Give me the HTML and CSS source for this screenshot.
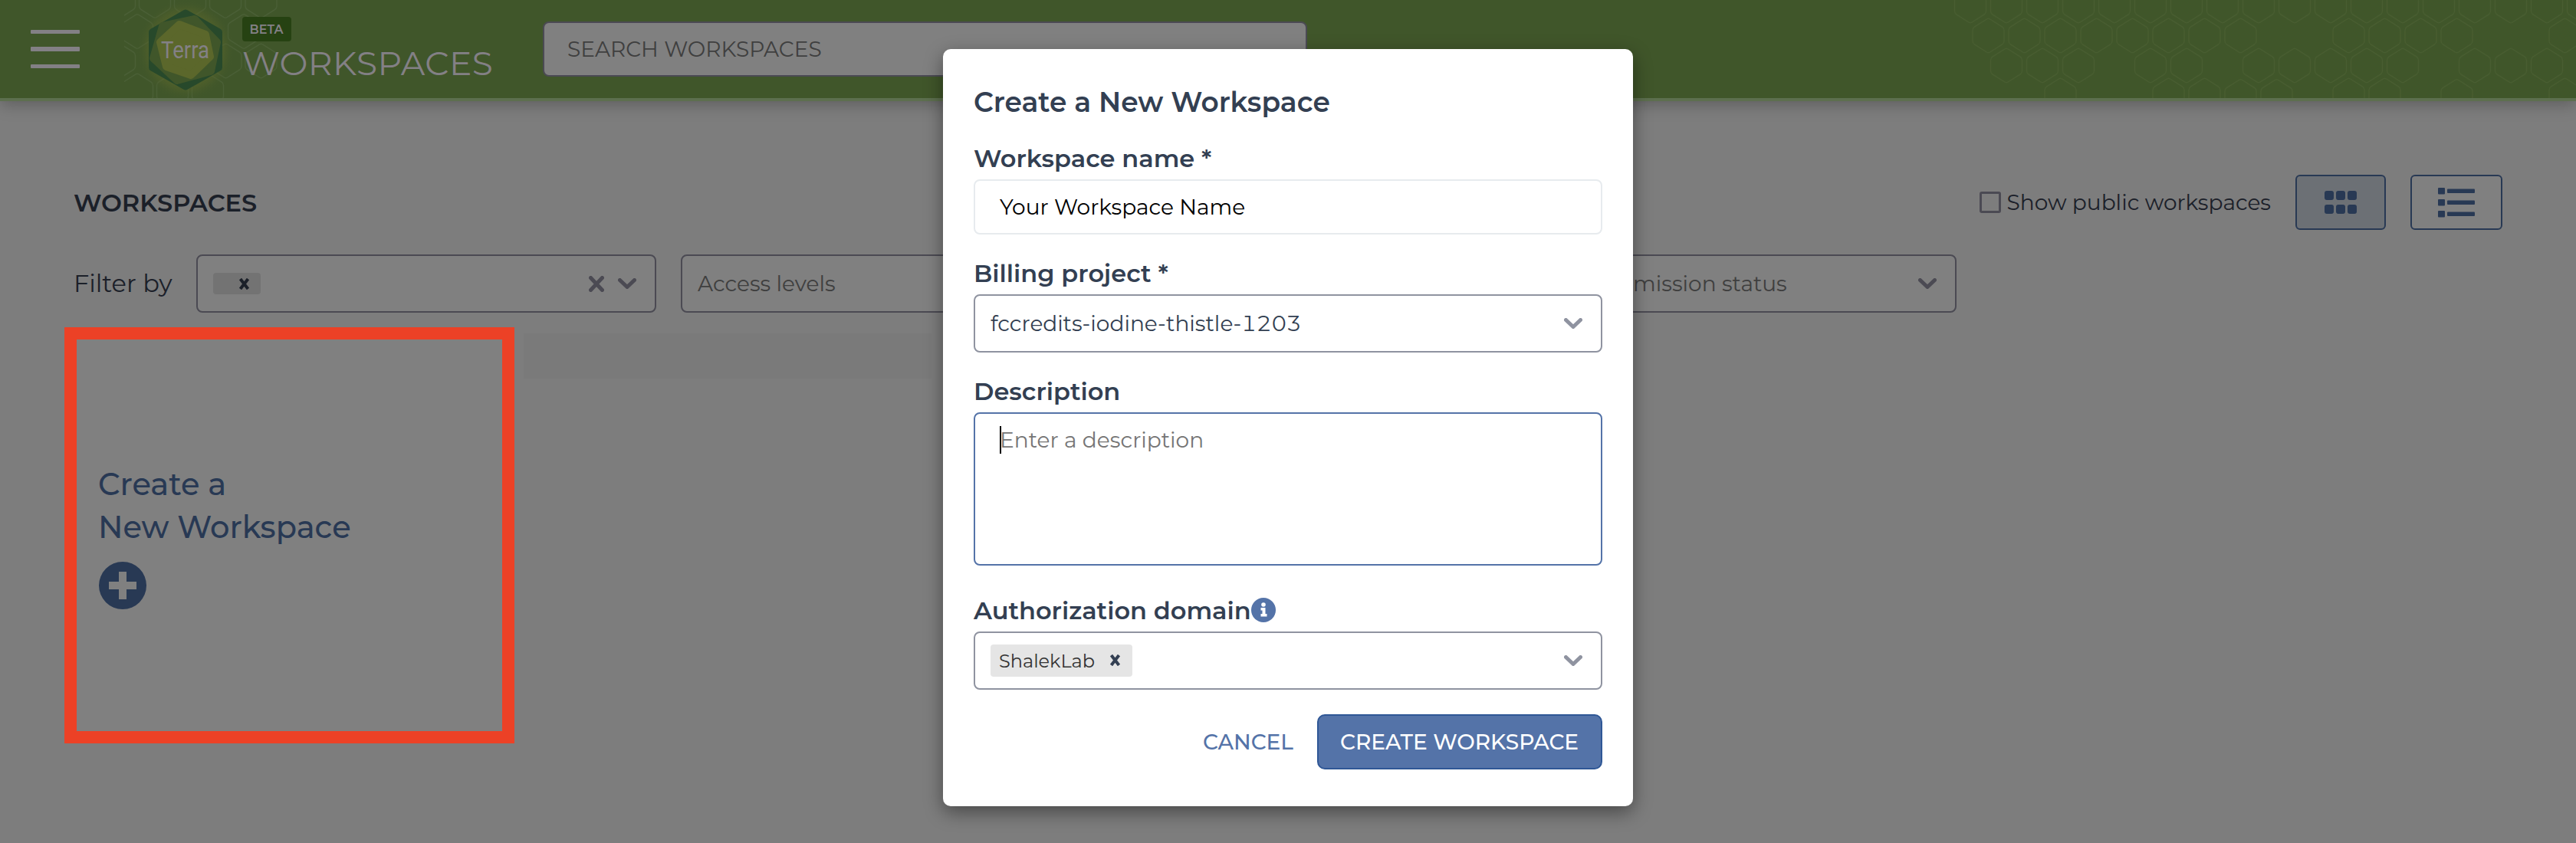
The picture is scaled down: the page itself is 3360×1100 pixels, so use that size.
FILE: index.html
```html
<!DOCTYPE html>
<html lang="en">
<head>
<meta charset="utf-8">
<title>Terra - Workspaces</title>
<link rel="stylesheet" href="styles.css">
</head>
<body>
<svg class="defs" width="0" height="0">
  <defs>
    <path id="hex" d="M-2-21.5Q0-23 2-21.5L18-11.5Q20.5-10 20.5-7V7Q20.5 10 18 11.5L2 21.5Q0 23-2 21.5L-18 11.5Q-20.5 10-20.5 7V-7Q-20.5-10-18-11.5Z"/>
    <path id="chev" d="M2.5 2.5L12 11.5L21.5 2.5"/>
    <path id="cross" d="M2.5 1L12.500 14M12.500 1L2.500 14"/>
  </defs>
</svg>

<header class="topbar">
  <svg class="hexes hexes-right" width="820" height="128">
    <g><use href="#hex" x="30" y="7.500"/><use href="#hex" x="77" y="7.500"/><use href="#hex" x="124" y="7.500"/><use href="#hex" x="171" y="7.500"/><use href="#hex" x="218" y="7.500"/><use href="#hex" x="265" y="7.500"/><use href="#hex" x="312" y="7.500"/><use href="#hex" x="359" y="7.500"/><use href="#hex" x="406" y="7.500"/><use href="#hex" x="453" y="7.500"/><use href="#hex" x="500" y="7.500"/><use href="#hex" x="547" y="7.500"/><use href="#hex" x="594" y="7.500"/><use href="#hex" x="641" y="7.500"/><use href="#hex" x="688" y="7.500"/><use href="#hex" x="735" y="7.500"/><use href="#hex" x="782" y="7.500"/><use href="#hex" x="829" y="7.500"/></g>
    <g><use href="#hex" x="53.500" y="46.500"/><use href="#hex" x="100.500" y="46.500"/><use href="#hex" x="147.500" y="46.500"/><use href="#hex" x="194.500" y="46.500"/><use href="#hex" x="241.500" y="46.500"/><use href="#hex" x="288.500" y="46.500"/><use href="#hex" x="335.500" y="46.500"/><use href="#hex" x="382.500" y="46.500"/><use href="#hex" x="523.500" y="46.500"/><use href="#hex" x="570.500" y="46.500"/><use href="#hex" x="617.500" y="46.500"/><use href="#hex" x="664.500" y="46.500"/><use href="#hex" x="805.500" y="46.500"/></g>
    <g><use href="#hex" x="77" y="85.500"/><use href="#hex" x="124" y="85.500"/><use href="#hex" x="171" y="85.500"/><use href="#hex" x="265" y="85.500"/><use href="#hex" x="312" y="85.500"/><use href="#hex" x="406" y="85.500"/><use href="#hex" x="453" y="85.500"/><use href="#hex" x="500" y="85.500"/><use href="#hex" x="547" y="85.500"/><use href="#hex" x="594" y="85.500"/><use href="#hex" x="688" y="85.500"/><use href="#hex" x="735" y="85.500"/><use href="#hex" x="782" y="85.500"/></g>
    <g><use href="#hex" x="147.500" y="124.500"/><use href="#hex" x="288.500" y="124.500"/><use href="#hex" x="335.500" y="124.500"/><use href="#hex" x="382.500" y="126"/><use href="#hex" x="429.500" y="126"/><use href="#hex" x="523.500" y="124.500"/><use href="#hex" x="570.500" y="124.500"/><use href="#hex" x="664.500" y="126"/><use href="#hex" x="805.500" y="124.500"/></g>
  </svg>
  <div class="menu"><i></i><i></i><i></i></div>
  <svg class="logo" width="200" height="128" viewBox="162 0 200 128">
    <defs>
      <radialGradient id="glow"><stop offset=".6" stop-color="#5d682b" stop-opacity=".8"/><stop offset=".8" stop-color="#55632b" stop-opacity=".4"/><stop offset="1" stop-color="#40562a" stop-opacity="0"/></radialGradient>
    </defs>
    <g class="hexes">
      <use href="#hex" x="156" y="1"/><use href="#hex" x="202" y="1"/><use href="#hex" x="248" y="1"/><use href="#hex" x="294" y="1"/><use href="#hex" x="340.500" y="1"/>
      <use href="#hex" x="179" y="41"/><use href="#hex" x="318" y="41"/>
      <use href="#hex" x="156" y="79.500"/><use href="#hex" x="294.500" y="79.500"/><use href="#hex" x="340.500" y="79.500"/>
      <use href="#hex" x="179" y="118.500"/><use href="#hex" x="225" y="118.500"/><use href="#hex" x="271" y="118.500"/>
    </g>
    <ellipse cx="242" cy="65" rx="64" ry="66" fill="url(#glow)"/>
    <path class="logo-outer" d="M242 17.500L285 42V88L242 112.500L199 88V42Z"/>
    <path class="logo-mid" d="M212 34L254 25L283 55L275 93L231 105L200 76Z"/>
    <path class="logo-inner" d="M234 32L268 45L274 74L249 98L217 87L209 55Z"/>
    <text class="logo-text" x="210" y="75.500" textLength="63" lengthAdjust="spacingAndGlyphs">Terra</text>
  </svg>
  <div class="brand">
    <span class="beta">BETA</span>
    <span class="section">WORKSPACES</span>
  </div>
  <div class="search">SEARCH WORKSPACES</div>
</header>

<main class="page">
  <div class="toolbar">
    <h1>WORKSPACES</h1>
    <label class="public"><span class="box"></span>Show public workspaces</label>
    <div class="toggle active">
      <svg width="42" height="30"><g><rect width="12" height="12" rx="3"/><rect x="15" width="12" height="12" rx="3"/><rect x="30" width="12" height="12" rx="3"/><rect y="18" width="12" height="12" rx="3"/><rect x="15" y="18" width="12" height="12" rx="3"/><rect x="30" y="18" width="12" height="12" rx="3"/></g></svg>
    </div>
    <div class="toggle list">
      <svg width="48" height="40"><g><rect y="1" width="9" height="8.500" rx="1"/><rect x="12" y="2.500" width="36" height="5.500" rx="1"/><rect y="16" width="9" height="8.500" rx="1"/><rect x="12" y="17.500" width="36" height="5.500" rx="1"/><rect y="31" width="9" height="8.500" rx="1"/><rect x="12" y="32.500" width="36" height="5.500" rx="1"/></g></svg>
    </div>
  </div>

  <div class="filters">
    <span class="filter-label">Filter by</span>
    <div class="select dim tags">
      <span class="chip"><svg class="x" width="15" height="15"><use href="#cross"/></svg></span>
      <svg class="clear" width="20" height="21" viewBox="0 0 20 21"><path d="M2.500 2.500L17.500 18.500M17.500 2.500L2.500 18.500"/></svg>
      <svg class="chev" width="24" height="14"><use href="#chev"/></svg>
    </div>
    <div class="select dim grow"><span>Access levels</span></div>
    <div class="select dim grow"></div>
    <div class="select dim status"><span>Submission status</span><svg class="chev" width="24" height="14"><use href="#chev"/></svg></div>
  </div>

  <div class="cards">
    <div class="new-card">
      Create a<br>New Workspace
      <svg width="62" height="62"><circle cx="31" cy="31" r="31"/><path d="M26 13h10v13h13v10h-13v13h-10v-13h-13v-10h13z"/></svg>
    </div>
    <div class="row-bg"></div>
  </div>
</main>

<div class="highlight"></div>

<section class="modal">
  <h2>Create a New Workspace</h2>
  <div class="label name">Workspace name *</div>
  <div class="input">Your Workspace Name</div>
  <div class="label">Billing project *</div>
  <div class="select"><span>fccredits-iodine-thistle-1203</span><svg class="chev" width="24" height="14"><use href="#chev"/></svg></div>
  <div class="label">Description</div>
  <div class="textarea"><i class="caret"></i>Enter a description</div>
  <div class="label auth"><span>Authorization domain</span><svg width="32" height="32"><circle cx="16" cy="16" r="16"/><path d="M12.500 13h6v8h2v3.500h-8v-3.500h2v-4.500h-2z"/><circle class="dot" cx="16" cy="9" r="2.800"/></svg></div>
  <div class="select tags">
    <span class="chip">ShalekLab<svg class="x" width="15" height="15"><use href="#cross"/></svg></span>
    <svg class="chev" width="24" height="14"><use href="#chev"/></svg>
  </div>
  <div class="actions"><span class="cancel">CANCEL</span><span class="create">CREATE WORKSPACE</span></div>
</section>
</body>
</html>
```
FILE: styles.css
```css
* { box-sizing: border-box; }

body {
  margin: 0;
  height: 1100px;
  overflow: hidden;
  position: relative;
  background: #7d7d7d;
  color: #1b2029;
  font-family: Montserrat, Inter, sans-serif;
  font-size: 28px;
}

h1, h2 { margin: 0; }
svg { display: block; flex: none; }
.defs { position: absolute; }

/* Header */
.topbar {
  position: relative;
  display: flex;
  align-items: center;
  height: 132px;
  border-bottom: 4px solid #5d6f4f;
  background: #40562a;
  box-shadow: 0 4px 20px rgba(0, 0, 0, .26);
}
.hexes { fill: none; stroke: #4a5f36; stroke-width: 1.5; }
.hexes-right { position: absolute; right: 0; top: 0; stroke: #485d31; }
.menu {
  display: flex;
  flex-direction: column;
  gap: 17px;
  width: 64px;
  margin-left: 40px;
}
.menu i { height: 5.5px; background: #838085; border-radius: 1px; }
.logo { margin-left: 58px; }
.logo path { stroke-width: 10; stroke-linejoin: round; }
.logo-outer { fill: #27492b; stroke: #27492b; }
.logo-mid { fill: #40562a; stroke: #40562a; }
.logo-inner { fill: #5b672b; stroke: #5b672b; }
.logo-text { font: 400 31px Roboto, sans-serif; fill: #838085; }
.brand {
  display: flex;
  flex-direction: column;
  align-items: flex-start;
  width: 346px;
  height: 128px;
  padding-top: 22px;
  margin-left: -46px;
  color: #838085;
}
.beta {
  height: 32px;
  width: 64px;
  padding-left: 9.5px;
  border-radius: 4px;
  background: #264212;
  font-size: 16px;
  font-weight: 600;
  line-height: 33px;
}
.section {
  margin-top: 3px;
  font-size: 44px;
  line-height: 50px;
  letter-spacing: .45px;
}
.search {
  width: 997px;
  height: 72px;
  margin-left: 46px;
  padding-left: 30px;
  border: 2px solid #4b4a53;
  border-radius: 8px;
  background: #808080;
  color: #3f3f3f;
  line-height: 68px;
}

/* Page */
.page { padding: 96px 96px 0; }
.toolbar { display: flex; align-items: center; height: 72px; }
.toolbar h1 { flex: 1; font-size: 32px; font-weight: 600; }
.public { display: flex; align-items: center; gap: 8px; line-height: 72px; }
.box { width: 28px; height: 28px; border: 3px solid #4b4a53; border-radius: 3px; }
.toggle {
  display: flex;
  align-items: center;
  justify-content: center;
  width: 118px;
  height: 72px;
  margin-left: 32px;
  border: 2px solid #283954;
  border-radius: 6px;
}
.toggle g { fill: #283954; }
.toggle.active { background: #6c7075; }
.toggle.list { width: 120px; background: #808080; }

.filters {
  display: flex;
  gap: 32px;
  width: 2456px;
  margin-top: 32px;
}
.filter-label {
  width: 128px;
  font-size: 32px;
  line-height: 76px;
  white-space: nowrap;
}
.select {
  display: flex;
  align-items: center;
  justify-content: space-between;
  height: 76px;
  padding: 0 24px 0 20px;
  border: 2px solid #8f93a0;
  border-radius: 8px;
  background: #fff;
  color: #333f52;
  font-variant-numeric: tabular-nums;
  white-space: nowrap;
}
.select.dim {
  border-color: #4b4a53;
  background: #808080;
  color: #3f3f3f;
}
.dim.tags { width: 600px; }
.dim.grow { flex: 1; }
.dim.status { width: 499px; }
.chev, .clear, .x { fill: none; stroke: #8f93a0; stroke-width: 5; stroke-linecap: round; stroke-linejoin: round; }
.dim .chev, .dim .clear { stroke: #4b4a53; }
.dim .clear { margin: 0 18px 0 auto; }
.chip {
  display: flex;
  align-items: center;
  height: 42px;
  padding: 0 15px 0 11px;
  border-radius: 4px;
  background: #e5e5e5;
  color: #333;
  font-size: 24px;
}
.chip .x { stroke: #333f52; stroke-width: 4; stroke-linecap: butt; margin: -2px 0 0 19px; }
.dim .chip { height: 28px; width: 62px; padding: 0 0 0 14px; background: #737373; }
.dim .chip .x { stroke: #1b2029; margin-top: 0; }

.cards { display: flex; gap: 24px; padding-top: 27px; }
.new-card {
  width: 563px;
  height: 530px;
  padding: 169px 0 0 32px;
  background: #808080;
  color: #283954;
  font-size: 40px;
  font-weight: 500;
  line-height: 56px;
}
.new-card svg { margin: 17px 0 0 1px; fill: #283954; }
.new-card path { fill: #808080; }
.row-bg { width: 532px; height: 59px; background: #7a7a7a; }

.highlight {
  position: absolute;
  left: 84px;
  top: 427px;
  width: 587px;
  height: 543px;
  border: 16px solid #ec4126;
}

/* Dialog */
.modal {
  position: absolute;
  left: 1230px;
  top: 64px;
  width: 900px;
  height: 988px;
  padding: 47px 40px 48px;
  border-radius: 10px;
  background: #fff;
  color: #333f52;
  box-shadow: 0 8px 24px rgba(0, 0, 0, .42);
}
.modal h2 { font-size: 36px; font-weight: 600; line-height: 44px; }
.label {
  display: flex;
  margin: 34px 0 10px;
  font-size: 32px;
  font-weight: 600;
  line-height: 34px;
}
.label.name { margin-top: 35px; }
.label.auth { margin-top: 42px; }
.auth svg { fill: #5473a8; }
.auth path, .auth .dot { fill: #fff; }
.input {
  height: 72px;
  padding-left: 32px;
  border: 2px solid #e7ebee;
  border-radius: 8px;
  color: #000;
  line-height: 68px;
}
.textarea {
  display: flex;
  height: 200px;
  padding: 16px 0 0 32px;
  border: 2px solid #5473a8;
  border-radius: 8px;
  color: #757575;
  line-height: 36px;
}
.caret { width: 2px; height: 36px; margin-right: -2px; background: #000; }
.actions {
  display: flex;
  justify-content: flex-end;
  align-items: center;
  height: 72px;
  margin-top: 32px;
  color: #5473a8;
  font-weight: 500;
}
.cancel { margin-right: 31px; }
.create {
  width: 372px;
  height: 72px;
  border: 2px solid #2f5796;
  border-radius: 10px;
  background: #5473a8;
  color: #fff;
  line-height: 68px;
  padding-left: 28px;
}
```
